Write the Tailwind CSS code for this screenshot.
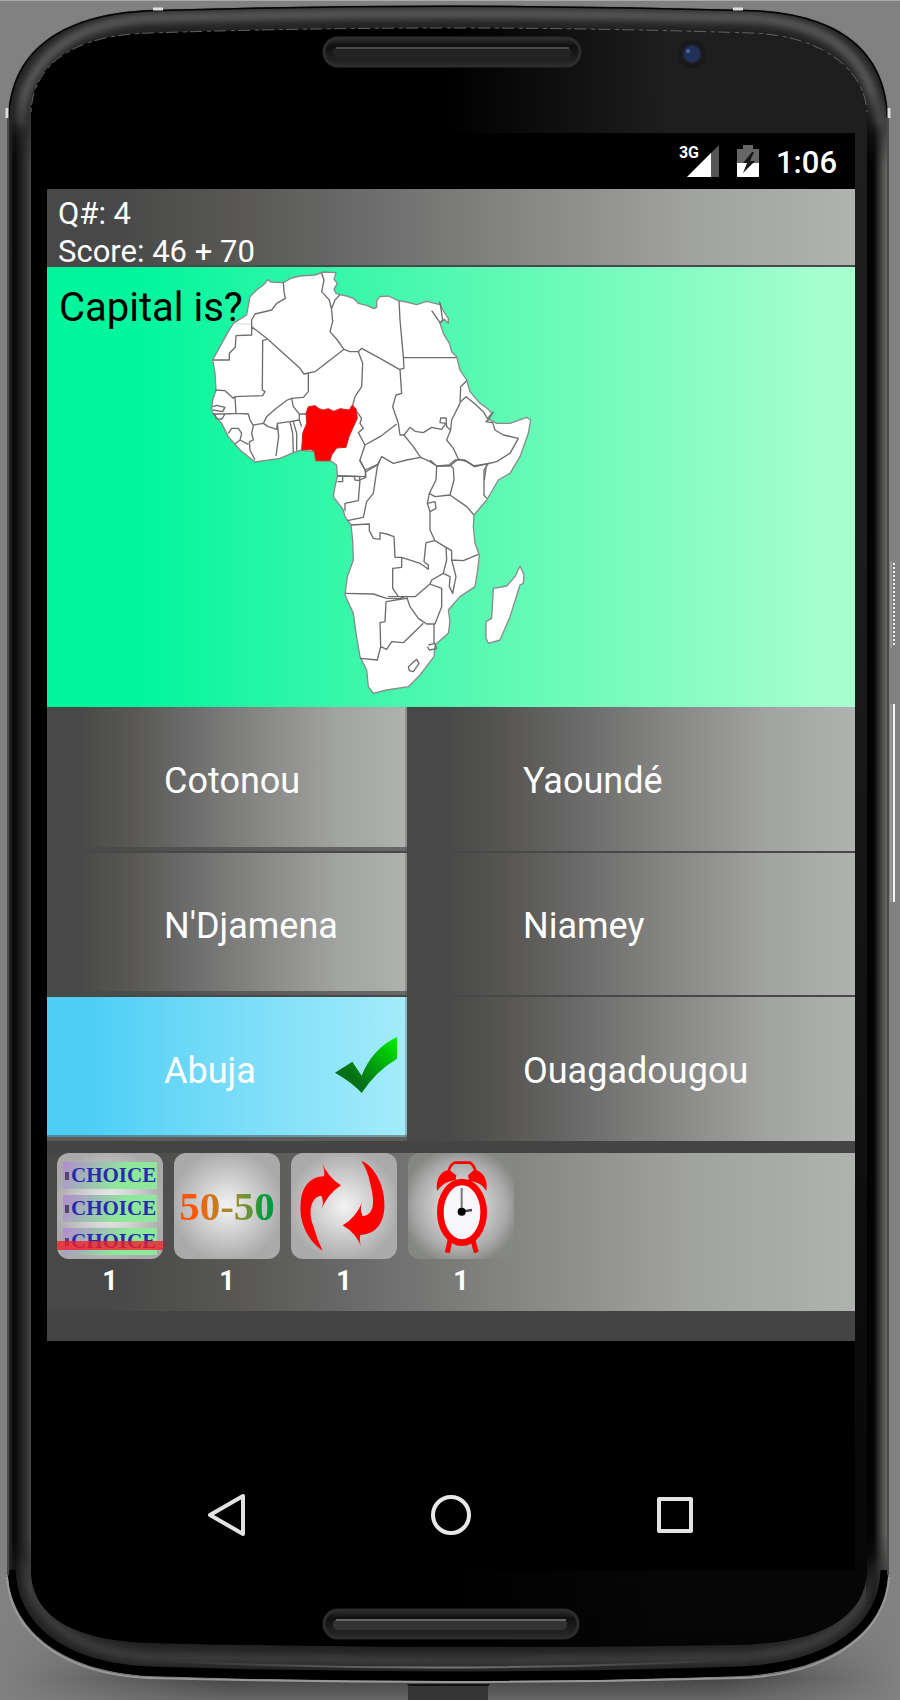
<!DOCTYPE html>
<html lang="en">
<head>
<meta charset="utf-8">
<meta name="viewport" content="width=device-width, initial-scale=1">
<title>Africa Capitals Quiz</title>
<script src="https://cdn.jsdelivr.net/npm/@tailwindcss/browser@4"></script>
</head>
<body class="bg-[#818181] font-[Roboto,sans-serif]">
<div class="relative min-h-screen pt-[133px] pr-[45px] pb-[129px] pl-[47px]">

  <!-- Phone body -->
  <svg class="absolute inset-0 h-full w-full" viewBox="0 0 900 1700" preserveAspectRatio="none" aria-hidden="true">
    <defs>
      <linearGradient id="shade" x1="0" y1="0" x2="0" y2="1"><stop offset="0" stop-color="#818181" stop-opacity="0"/><stop offset=".8" stop-color="#444"/><stop offset="1" stop-color="#666"/></linearGradient>
      <linearGradient id="fadeX"><stop offset="0" stop-color="#818181"/><stop offset=".25" stop-color="#818181" stop-opacity="0"/><stop offset=".8" stop-color="#818181" stop-opacity="0"/><stop offset="1" stop-color="#818181"/></linearGradient>
      <linearGradient id="face" x1="0" y1="0" x2="0" y2="1"><stop offset="0" stop-color="#1e1e1e"/><stop offset=".3" stop-color="#1c1d1d"/><stop offset="1" stop-color="#050505"/></linearGradient>
      <linearGradient id="glare"><stop offset=".5" stop-color="#000"/><stop offset=".76" stop-color="#000" stop-opacity="0"/></linearGradient>
      <linearGradient id="rimL"><stop offset="0" stop-color="#333"/><stop offset=".25" stop-color="#050505"/><stop offset=".75" stop-color="#303030"/><stop offset="1" stop-color="#4c4c4c"/></linearGradient>
      <linearGradient id="rimR"><stop offset="0" stop-color="#000"/><stop offset=".35" stop-color="#050505"/><stop offset=".7" stop-color="#4a4a48"/><stop offset=".9" stop-color="#656563"/><stop offset="1" stop-color="#222"/></linearGradient>
      <linearGradient id="ends" x1="0" y1="0" x2="0" y2="1"><stop offset="0" stop-color="#fff" stop-opacity="0"/><stop offset=".05" stop-color="#fff"/><stop offset=".95" stop-color="#fff"/><stop offset="1" stop-color="#fff" stop-opacity="0"/></linearGradient>
      <mask id="fadeEnds"><rect y="90" width="900" height="1520" fill="url(#ends)"/></mask>
      <linearGradient id="lip"><stop offset=".1" stop-color="#777" stop-opacity="0"/><stop offset=".5" stop-color="#777"/><stop offset=".9" stop-color="#777" stop-opacity="0"/></linearGradient>
      <linearGradient id="slot" x1="0" y1="0" x2="0" y2="1"><stop offset="0" stop-color="#333"/><stop offset=".3" stop-color="#101010"/><stop offset="1" stop-color="#2b2b2b"/></linearGradient>
      <filter id="soft" x="-20%" y="-60%" width="140%" height="220%"><feGaussianBlur stdDeviation="4"/></filter>
      <clipPath id="shell"><path d="M8 118C10 55 55 14 150 10Q450 1 752 10C845 14 886 55 888 118V1575C886 1625 840 1671 740 1676Q450 1686 150 1676C55 1671 11 1625 8 1575Z"/></clipPath>
    </defs>
    <rect y="1590" width="900" height="110" fill="url(#shade)"/>
    <rect y="1560" width="900" height="140" fill="url(#fadeX)"/>
    <rect width="900" height="1" fill="#aaa"/>
    <path d="M8 118C10 55 55 14 150 10Q450 1 752 10C845 14 886 55 888 118V1575C886 1625 840 1671 740 1676Q450 1686 150 1676C55 1671 11 1625 8 1575Z" fill="#282828" stroke="#777" stroke-width="2"/>
    <g clip-path="url(#shell)">
      <rect width="900" height="1700" fill="#222"/>
      <path d="M19 128C22 60 70 23 150 18Q450 9 752 18C832 23 875 60 878 128" fill="none" stroke="#696969" stroke-width="8" filter="url(#soft)"/>
      <path d="M24 1560C28 1618 75 1652 150 1657Q450 1664 740 1657C825 1652 868 1618 874 1560" fill="none" stroke="#444" stroke-width="8" filter="url(#soft)"/>
      <g mask="url(#fadeEnds)">
        <rect x="8" y="90" width="24" height="1520" fill="url(#rimL)"/>
        <rect x="866" y="90" width="23" height="1520" fill="url(#rimR)"/>
      </g>
      <path d="M8 118C10 55 55 14 150 10Q450 1 752 10C845 14 886 55 888 118" fill="none" stroke="#050505" stroke-width="3"/>
      <path d="M9 1570C11 1625 55 1669 150 1673Q450 1683 740 1673C840 1668 886 1625 887 1570" fill="none" stroke="#000" stroke-width="13"/>
      <path d="M100 1658Q450 1678 800 1656" fill="none" stroke="url(#lip)" stroke-width="2"/>
    </g>
    <path d="M31 112C33 65 72 35 150 33Q450 23 750 33C825 35 865 72 867 112V1572C865 1618 820 1643 740 1645Q450 1650 150 1643C70 1640 33 1615 31 1572Z" fill="url(#face)"/>
    <path d="M31 112C33 65 72 35 150 33Q450 23 750 33C825 35 865 72 867 112V1572C865 1618 820 1643 740 1645Q450 1650 150 1643C70 1640 33 1615 31 1572Z" fill="url(#glare)"/>
    <path d="M31 112C33 65 72 35 150 33Q450 23 750 33C825 35 865 72 867 112" fill="none" stroke="#626262" stroke-width="1" stroke-dasharray="4 3 12 5"/>
    <path d="M7 1577C10 1627 55 1674 150 1678Q450 1686 740 1678C840 1674 886 1627 889 1577" fill="none" stroke="#999" stroke-width="2"/>
    <path d="M153 9h10M733 9h10M7 108v10M889 108v10" stroke="#ddd" stroke-width="3"/>
    <path d="M8 118V1575M888 118V1575" stroke="#4a4a4a" stroke-width="2"/>
    <rect x="323" y="37" width="258" height="30" rx="15" fill="url(#slot)"/>
    <rect x="324" y="38" width="256" height="28" rx="14" fill="none" stroke="#2c2c2c" stroke-width="3"/>
    <rect x="333" y="47" width="238" height="11" rx="5" fill="#242424"/>
    <path d="M336 48H569" stroke="#4b4b4b" stroke-width="2"/>
    <rect x="323" y="1609" width="256" height="30" rx="15" fill="url(#slot)"/>
    <rect x="324" y="1610" width="254" height="28" rx="14" fill="none" stroke="#2c2c2c" stroke-width="3"/>
    <rect x="333" y="1619" width="234" height="11" rx="5" fill="#333"/>
    <path d="M336 1620H566" stroke="#686868" stroke-width="2"/>
    <circle cx="692" cy="54" r="14" fill="#19191b"/><circle cx="692" cy="54" r="10" fill="#20232c"/><circle cx="692" cy="54" r="8" fill="#22315c"/><circle cx="688" cy="51" r="2" fill="#4a679f"/>
    <path d="M891 561V648" stroke="#999" stroke-width="2"/>
    <path d="M894 563V646" stroke="#eee" stroke-width="2" stroke-dasharray="2 2"/>
    <path d="M891 704V902" stroke="#999" stroke-width="2"/>
    <path d="M894 704V902" stroke="#f5f5f5" stroke-width="2"/>
    <path d="M407 1684H490L486 1689H411Z" fill="#111"/><rect x="408" y="1686" width="80" height="14" fill="#353535"/>
  </svg>

  <div class="relative flex flex-col bg-black">
    <!-- Status bar -->
    <header class="flex h-14 items-center justify-end pr-[18px] text-white">
      <span class="self-start pt-[10px] text-base leading-5 font-bold">3G</span>
      <svg class="-ml-3 h-8 w-8" viewBox="0 0 32 32" aria-label="Signal"><path d="M0 32 32 0V32Z" fill="#555"/><path d="M0 32 24 8V32Z" fill="#fff"/></svg>
      <svg class="ml-[18px] h-8 w-[22px]" viewBox="0 0 22 32" aria-label="Battery charging"><path d="M0 4H6V0H16V4H22V32H0Z" fill="#666"/><path d="M0 18H22V32H0Z" fill="#fff"/><path d="M15 7 6 18h4l-4 10 12-12h-5l4-9Z" fill="#151515"/></svg>
      <time class="ml-[17px] pt-1 text-[31px] leading-9 font-medium">1:06</time>
    </header>

    <!-- Score -->
    <section class="flex h-[78px] flex-col justify-end gap-3 border-b-2 border-[#484848] bg-[linear-gradient(90deg,#484848_8%,#5a5955_25%,#676767_36%,#888886_60%,#a1a3a0_80%,#b0b2af_100%)] px-[11px] text-[31px] leading-[26px] text-white">
      <p>Q#: 4</p>
      <p>Score: 46 + 70</p>
    </section>

    <!-- Question map -->
    <section class="relative h-[440px] bg-[linear-gradient(90deg,#00f69c_11%,#20f6a3_25%,#5cf9b4_55%,#a6ffce_96%)]">
      <svg class="ml-[153px] h-[440px] w-[340px]" viewBox="0 21 1020 1320" fill="none" stroke="#6d6d6d" stroke-width="4" stroke-linejoin="round" role="img" aria-label="Map of Africa with Nigeria highlighted">
        <path fill="#fff" stroke="#8a8a8a" d="M205 58 212 66 250 68 275 54 300 48 345 45 370 36 408 38 402 58 412 70 402 88 408 100 420 104 440 108 460 115 475 130 500 136 522 146 530 142 530 122 540 110 565 108 595 122 620 126 650 134 680 124 720 134 718 126 728 150 745 175 745 190 733 178 720 190 730 220 748 250 755 275 770 290 780 330 800 360 810 395 840 430 865 448 875 460 862 475 890 490 930 490 980 472 992 480 985 520 960 590 930 640 895 660 860 720 822 765 820 800 825 850 838 885 833 930 825 980 780 1010 745 1050 750 1085 745 1120 705 1155 702 1190 660 1245 625 1280 560 1290 520 1300 505 1280 500 1230 480 1190 468 1120 460 1060 435 1005 442 950 460 900 458 840 453 795 435 770 430 750 400 710 405 680 412 650 410 615 392 602 348 602 343 575 305 570 280 578 240 595 165 606 120 570 85 530 65 490 40 462 35 450 38 420 48 390 45 340 38 300 60 260 85 215 100 190 140 165 150 110 170 90 190 75Z"/>
        <path stroke="#ddd" d="M105 190 155 193"/>
        <path d="M250 68 252 95 256 115 230 130 215 150 165 162 155 180 155 200 200 235 300 325 312 342 345 335 432 268 412 240 390 215 398 185 395 150 388 120 365 95 372 60 365 40M395 145 405 120 420 104M155 200V225L108 227 106 262 88 280 88 300 38 300M200 238 188 242 187 390 195 395 188 407 105 410 100 415 75 392 45 390M105 410 108 460 75 462 38 462M38 440 50 436 75 442 68 455 38 450M45 462 48 475 65 478 75 462M108 460 145 462 150 480 160 497 155 520 160 540 148 545 150 570 165 600M145 553 120 540M85 520 95 505 115 505 125 520 120 540 105 552M160 495 190 490 200 470 225 448 262 420 275 415 310 412 325 395 325 340M275 415 280 440 298 462 318 462M190 490 205 500 230 508 232 490 270 485 298 480 298 462M232 490 236 530 228 588M270 485 278 520 280 578M280 485 290 520 290 572M298 480 305 500M432 268 450 275 475 275 485 265 540 295 598 328 612 325 610 290 600 180 597 122M475 275 488 310 485 380 465 410 458 436M458 436 470 455 485 475 480 490 490 505 475 518 495 555 480 600 498 635 495 650 412 647M495 555 540 530 590 492"/>
        <path fill="#f00" stroke="#d42020" stroke-width="3" d="M325 440 345 437 357 446 370 450 385 446 402 454 420 446 448 450 456 436 468 447 472 475 458 505 447 530 438 562 410 564 395 585 390 602 348 602 343 572 328 568 305 570 308 520 320 490 318 460Z"/>
        <!-- Northeast borders -->
        <g transform="translate(480 0)">
          <path d="M132 293H290M120 328 125 400 108 405 98 440 115 490 120 525 132 525 150 502 165 514 190 518 215 502 245 508 258 490 240 488 242 474 258 474 260 500 272 510 275 480 290 450 300 430 302 380 320 362M132 525 160 560 182 592 210 605 230 618 270 618 295 597 280 565 260 540 272 510M302 425 318 410 345 432 370 455 385 480 400 455M385 480 378 485 398 488 405 510 430 525 475 535 450 580 410 605 380 612 340 618 320 605 295 597M18 635 52 615 65 590 100 610 140 600 182 592M380 612 373 660M215 152 240 188 248 180 240 128"/>
        </g>
        <!-- Central and southern borders -->
        <g transform="translate(360 600)">
          <path d="M330 0 350 18 348 60 328 100 345 110 390 105 402 60 400 25 390 15 350 18M390 12 405 0 435 0 465 20 505 10 492 30 492 105 500 115M390 105 440 140 462 165M328 100 322 130 345 125 348 145 330 155 322 130M330 155 330 210 345 242 318 248 312 305 325 315 325 328 300 310 245 292 225 292 222 230 200 222 180 218 180 238 160 235 148 212 148 192 93 195M82 182 130 172 140 125 160 100 172 20 180 0M75 152 75 130 115 122 120 60 138 52 135 30 175 12M52 48 120 50 118 62 105 60 102 48M52 65H68V50M135 30 118 0M245 292V322L218 325 218 385 235 410 205 410 260 410 285 410 330 372 335 360 370 340 380 300 378 262 345 242M75 400 160 402 200 415 240 416 260 408M378 262 395 272 395 300 408 350 398 400 388 380 390 350 370 340M395 300 430 302 475 283M330 372 365 385 365 440 345 492 320 492 295 475 270 440 260 410M260 415 198 425 195 485 180 488 182 560 200 568 215 545 250 548 310 490M182 560 172 600 120 595M342 492V550M325 555 345 550 350 566 328 570 322 560M265 620 290 598 297 610 280 635 268 632Z"/>
          <path fill="#fff" stroke="#8a8a8a" d="M600 318 612 345 610 370 600 375 570 470 540 540 505 550 498 535 498 485 515 475 520 385 560 378 585 350Z"/>
        </g>
      </svg>
      <h1 class="absolute top-[15px] left-3 text-[40px] leading-[52px] text-black">Capital is?</h1>
    </section>

    <!-- Answers -->
    <section class="grid grid-cols-[360fr_448fr] bg-[#444] text-[36px] text-white" aria-label="Answers">
      <button class="h-[146px] border-b-2 border-[#484848] bg-[linear-gradient(90deg,#484848_8%,#5a5955_25%,#676767_36%,#888886_60%,#a1a3a0_80%,#b0b2af_100%)] pt-1 pl-[117px] text-left shadow-[inset_0_-4px_rgba(72,72,72,0.7),inset_-2px_0_rgba(72,72,72,0.3)]">Cotonou</button>
      <button class="h-[146px] border-b-2 border-[#484848] bg-[linear-gradient(90deg,#484848_8%,#5a5955_25%,#676767_36%,#888886_60%,#a1a3a0_80%,#b0b2af_100%)] pt-1 pl-[116px] text-left">Yaoundé</button>
      <button class="h-36 border-b-2 border-[#484848] bg-[linear-gradient(90deg,#484848_8%,#5a5955_25%,#676767_36%,#888886_60%,#a1a3a0_80%,#b0b2af_100%)] pt-1 pl-[117px] text-left shadow-[inset_0_-4px_rgba(72,72,72,0.7),inset_-2px_0_rgba(72,72,72,0.3)]">N'Djamena</button>
      <button class="h-36 border-b-2 border-[#484848] bg-[linear-gradient(90deg,#484848_8%,#5a5955_25%,#676767_36%,#888886_60%,#a1a3a0_80%,#b0b2af_100%)] pt-1 pl-[116px] text-left">Niamey</button>
      <button class="flex h-36 items-center justify-between border-b-4 border-[#5c5c5a] bg-[linear-gradient(90deg,#4dcff5_12%,#77dcf8_50%,#a3ecfa_100%)] pt-2 pr-[10px] pl-[117px] shadow-[inset_0_-2px_rgba(72,72,72,0.5),inset_-2px_0_rgba(72,72,72,0.3)]">
        <span>Abuja</span>
        <svg class="-mt-3 h-14 w-[62px]" viewBox="0 0 186 168" aria-label="Correct"><defs><linearGradient id="tick" x1="0" y1="1" x2="1" y2="0"><stop offset=".3" stop-color="#067015"/><stop offset="1" stop-color="#00f000"/></linearGradient></defs><path d="M0 107 52 74 80 116Q112 35 186 0V65Q122 103 80 168 54 138 0 107Z" fill="url(#tick)"/></svg>
      </button>
      <button class="h-36 bg-[linear-gradient(90deg,#484848_8%,#5a5955_25%,#676767_36%,#888886_60%,#a1a3a0_80%,#b0b2af_100%)] pt-1 pl-[116px] text-left">Ouagadougou</button>
    </section>

    <!-- Lifelines -->
    <section class="border-t-12 border-b-30 border-[#444] bg-[linear-gradient(90deg,#484848_8%,#5a5955_25%,#676767_36%,#888886_60%,#a1a3a0_80%,#b0b2af_100%)]" aria-label="Lifelines">
      <div class="flex h-[158px] gap-[11px] pl-[10px] text-[27px] leading-[44px] font-bold text-white">
        <div class="flex flex-col items-center">
          <button aria-label="Remove one choice" class="relative flex h-[106px] w-[106px] flex-col gap-[6px] overflow-hidden rounded-xl bg-[radial-gradient(circle,#f4f4f4,#aaa_75%)] pt-[9px] pl-[6px] font-['Liberation_Serif',serif] text-[21px] leading-[27px] text-[#272caa]">
            <span class="flex h-[27px] w-[94px] items-center gap-[2px] bg-[linear-gradient(120deg,#b28bd0,#8fe79b_60%)] pl-[2px]"><i class="h-2 w-1 bg-[#554765]"></i>CHOICE</span>
            <span class="flex h-[27px] w-[94px] items-center gap-[2px] bg-[linear-gradient(120deg,#b28bd0,#8fe79b_60%)] pl-[2px]"><i class="h-2 w-1 bg-[#554765]"></i>CHOICE</span>
            <span class="flex h-[27px] w-[94px] items-center gap-[2px] bg-[linear-gradient(120deg,#b28bd0,#8fe79b_60%)] pl-[2px]"><i class="h-2 w-1 bg-[#554765]"></i>CHOICE</span>
            <span class="absolute top-[88px] left-0 h-[9px] w-full bg-[#f0202a]/80"></span>
          </button>
          <span>1</span>
        </div>
        <div class="flex flex-col items-center">
          <button class="flex h-[106px] w-[106px] items-center justify-center rounded-xl bg-[radial-gradient(circle,#f4f4f4,#aaa_75%)] font-['Liberation_Serif',serif] text-[41px]"><span class="bg-linear-to-r from-[#ff5500] from-15% to-[#009b3c] to-85% bg-clip-text text-transparent">50-50</span></button>
          <span>1</span>
        </div>
        <div class="flex flex-col items-center">
          <button aria-label="Swap question" class="h-[106px] w-[106px] rounded-xl bg-[radial-gradient(circle,#f4f4f4,#aaa_75%)]">
            <svg class="h-[106px] w-[106px]" viewBox="33 40 318 318" fill="#f00"><path d="M124 65Q142 112 183 137 143 163 124 209 133 188 124 168C94 170 82 216 101 261Q110 298 128 333C80 300 57 245 62 190 65 143 89 111 132 110Q136 89 124 65ZM244 63C285 78 318 145 313 207 309 255 286 283 241 286Q236 309 248 332 231 281 188 257 229 234 248 184 237 207 248 230C289 224 282 174 270 129Q264 94 244 63Z"/></svg>
          </button>
          <span>1</span>
        </div>
        <div class="flex flex-col items-center">
          <button aria-label="Extra time" class="h-[106px] w-[106px] rounded-xl bg-[radial-gradient(circle,#f4f4f4,#aaa_60%,#858783_80%)]">
            <svg class="h-[106px] w-[106px]" viewBox="381 40 318 318"><g fill="none" stroke="#f00"><path d="M503 96Q506 76 521 69H567Q580 77 584 98" stroke-width="8"/><path d="M507 302 499 339M576 302 586 339" stroke-width="15"/></g><path d="M468 154C462 113 486 89 506 92L526 107 524 122C500 124 486 132 468 154ZM616 154C623 113 598 89 578 92L561 107 564 124C588 126 604 134 616 154Z" fill="#f00"/><ellipse cx="543" cy="218" rx="65" ry="91" fill="#f8f8fc" stroke="#f00" stroke-width="20"/><path d="M542 145V216" stroke="#777" stroke-width="6"/><path d="M542 216 573 211" stroke="#444" stroke-width="7"/><circle cx="542" cy="216" r="12" fill="#000"/></svg>
          </button>
          <span>1</span>
        </div>
      </div>
    </section>

    <!-- System navigation -->
    <nav class="mt-[118px] grid h-28 grid-cols-3 px-[68px]" aria-label="System">
      <button aria-label="Back" class="flex items-center justify-center"><svg class="h-11 w-11" viewBox="0 0 44 44" fill="none" stroke="#e2e2e2" stroke-width="4" stroke-linejoin="round"><path d="M5 22 38 3V41Z"/></svg></button>
      <button aria-label="Home" class="flex items-center justify-center"><svg class="h-11 w-11" viewBox="0 0 44 44" fill="none" stroke="#e8e8e8" stroke-width="4"><circle cx="22" cy="22" r="18"/></svg></button>
      <button aria-label="Recent apps" class="flex items-center justify-center"><svg class="h-11 w-11" viewBox="0 0 44 44" fill="none" stroke="#e2e2e2" stroke-width="4" stroke-linejoin="round"><path d="M6 6H38V38H6Z"/></svg></button>
    </nav>
  </div>
</div>
</body>
</html>
